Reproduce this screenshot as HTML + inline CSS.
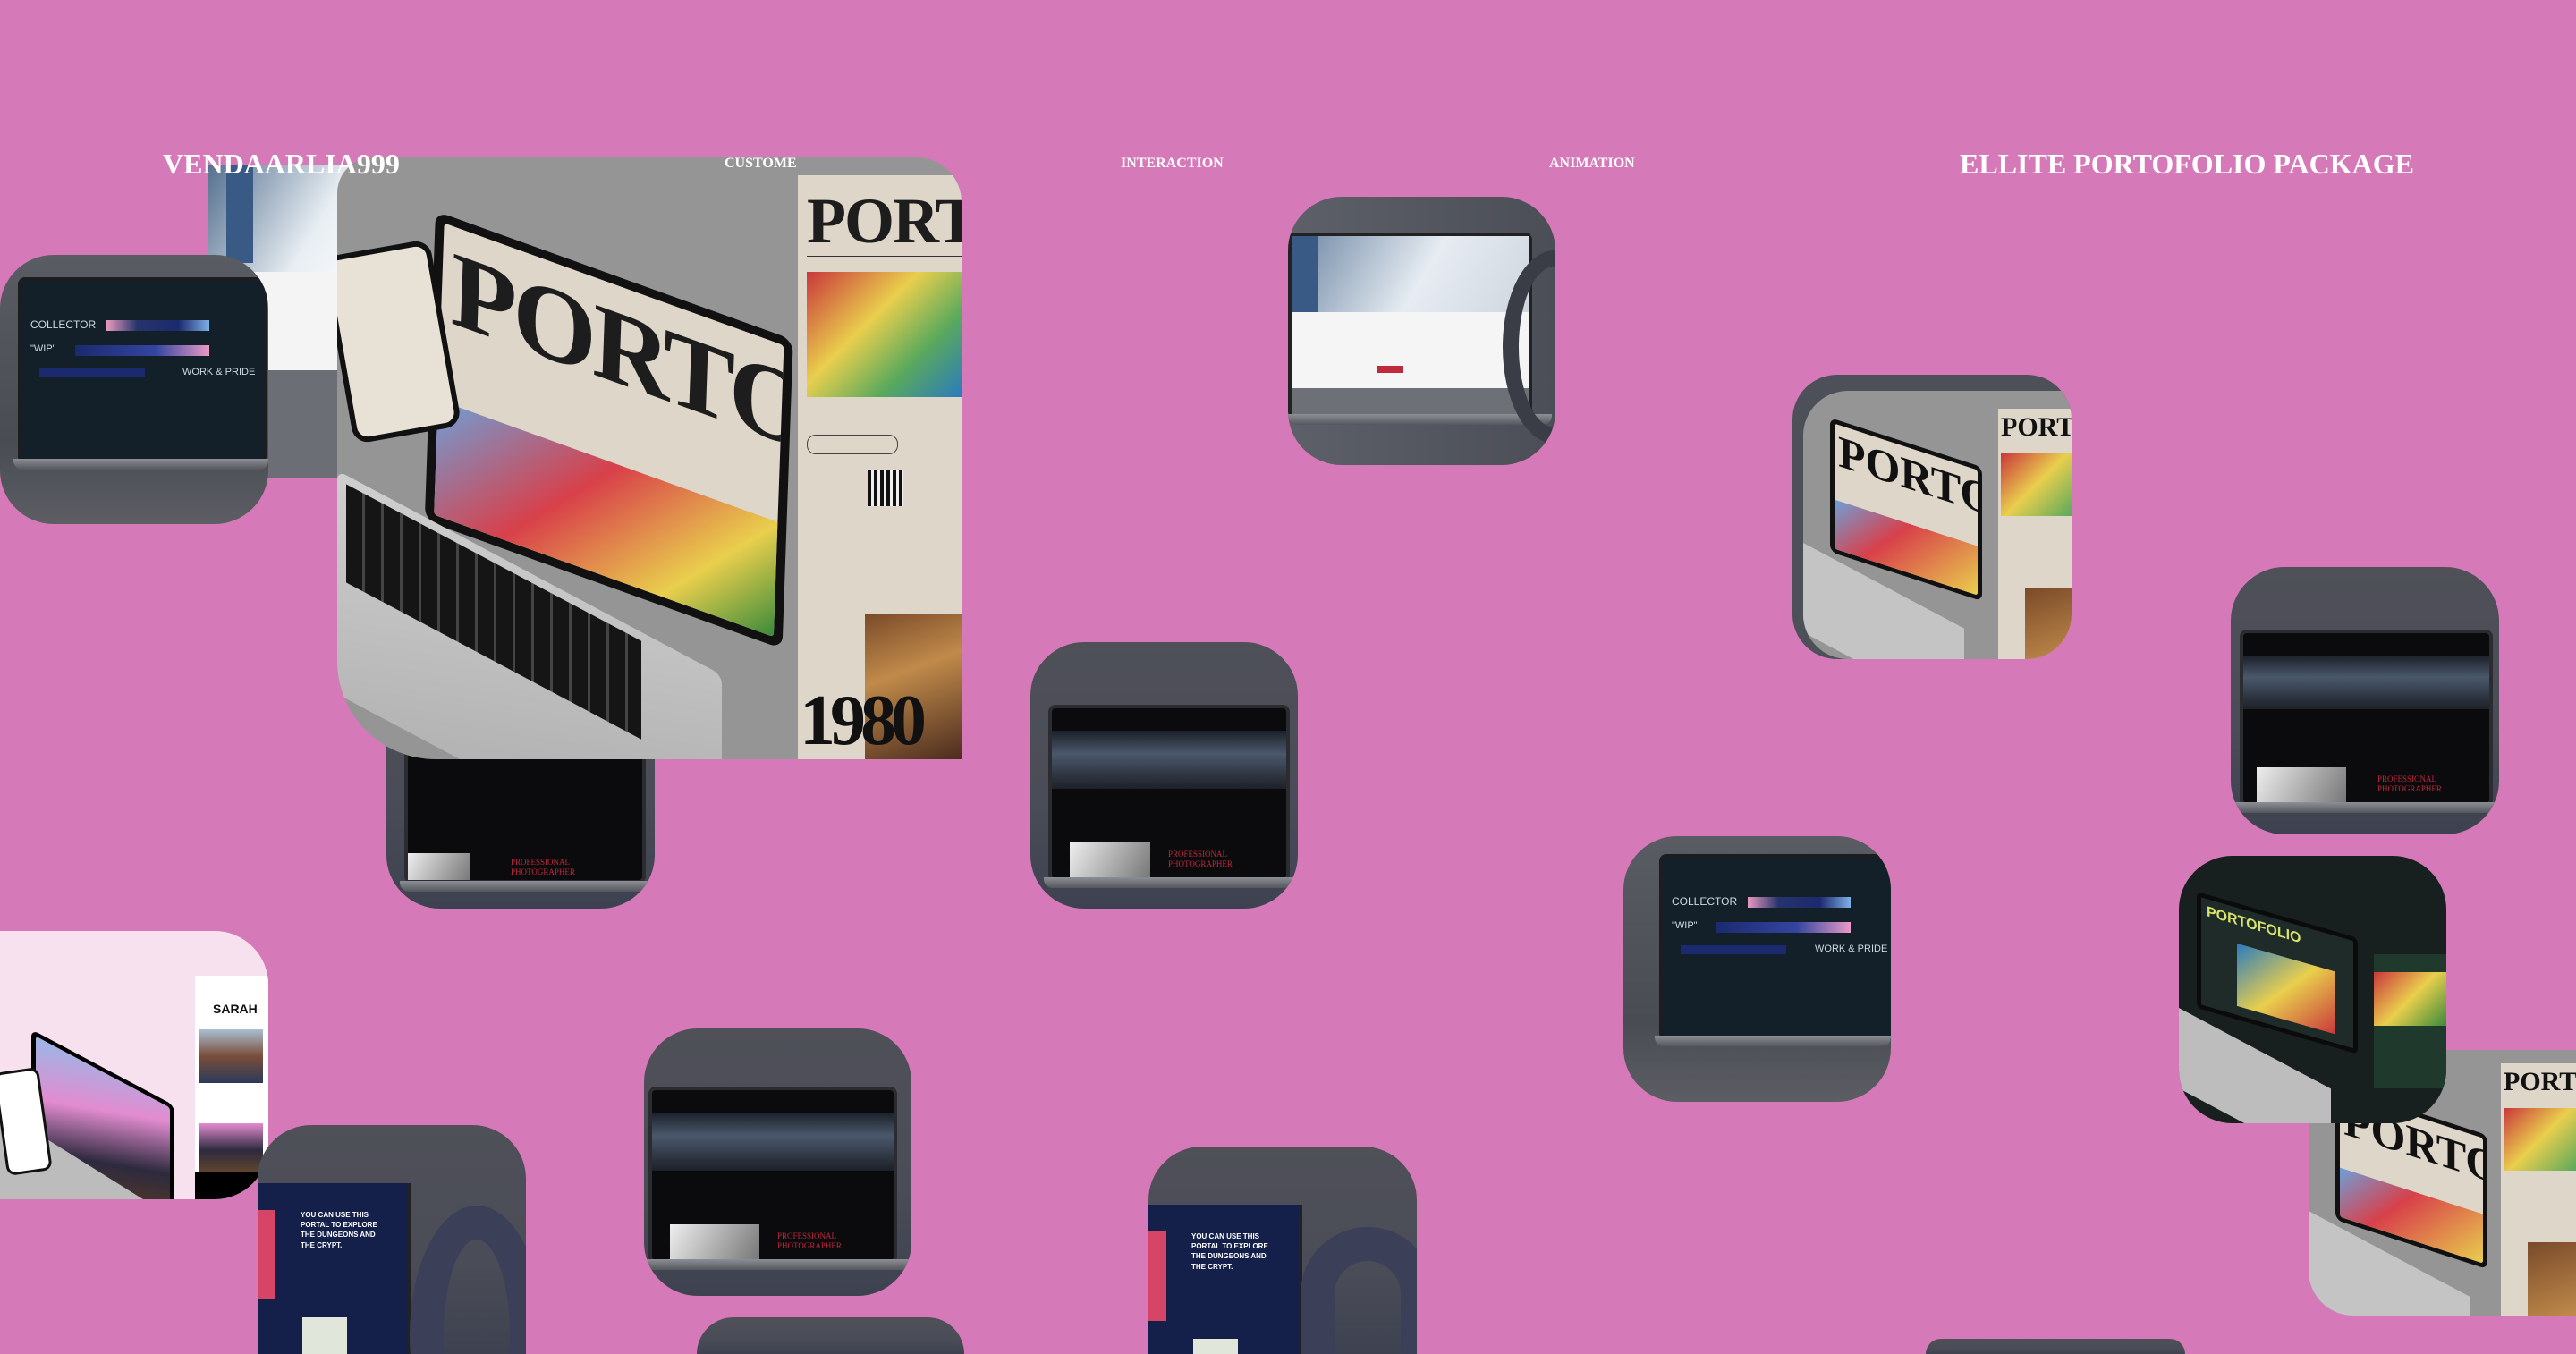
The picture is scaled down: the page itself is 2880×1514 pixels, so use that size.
<!DOCTYPE html>
<html><head><meta charset="utf-8"><style>
html,body{margin:0;padding:0;width:2880px;height:1514px;overflow:hidden}
body{background:#d679b8;font-family:"Liberation Serif",serif}
#w{position:relative;width:2880px;height:1514px;overflow:hidden;background:#d679b8}
.t{position:absolute;border-radius:60px;overflow:hidden}
.dark{background:linear-gradient(180deg,#4f5058 0%,#4a4c57 60%,#3e4250 100%)}
.lap{position:absolute;background:#0b0b0d;border:4px solid #2b2c30;border-radius:8px}
.base{position:absolute;height:12px;background:linear-gradient(#8d8f96,#55575d);border-radius:0 0 10px 10px}
.h{position:absolute;color:#fff;font-weight:bold;white-space:nowrap;line-height:1}
.sm{font-size:16px}
.red{position:absolute;color:#c0283c;font-size:9px;line-height:1.2}
.cut{border-bottom-left-radius:0;border-bottom-right-radius:0}
</style></head><body><div id="w">

<div class="t" style="left:233px;top:184px;width:200px;height:350px;border-radius:0;background:#cfd5dc">
  <div style="position:absolute;left:0;top:0;width:200px;height:120px;background:linear-gradient(120deg,#55708f,#e8eef3 60%,#fff)"></div>
  <div style="position:absolute;left:20px;top:0;width:30px;height:110px;background:#3a5a86"></div>
  <div style="position:absolute;left:0;top:120px;width:200px;height:110px;background:#f4f4f4"></div>
  <div style="position:absolute;left:0;top:230px;width:200px;height:120px;background:#6b6e74"></div>
</div>

<div class="t" style="left:0;top:285px;width:300px;height:301px;background:linear-gradient(180deg,#5a5c63,#4a4c54 70%,#5c5e64)">
  <div class="lap" style="left:20px;top:25px;width:270px;height:200px;background:#13202a;border-color:#1c1d20">
    <div style="position:absolute;left:10px;top:42px;color:#cfd8df;font:12px 'Liberation Sans',sans-serif">COLLECTOR</div>
    <div style="position:absolute;left:95px;top:44px;width:115px;height:12px;background:linear-gradient(90deg,#e89ac0,#26336b 30%,#1b2a6e 70%,#7fb0e8)"></div>
    <div style="position:absolute;left:10px;top:70px;color:#cfd8df;font:11px 'Liberation Sans',sans-serif">"WIP"</div>
    <div style="position:absolute;left:60px;top:72px;width:150px;height:12px;background:linear-gradient(90deg,#1b2a6e,#3445a0 60%,#e99ac6)"></div>
    <div style="position:absolute;left:20px;top:98px;width:118px;height:10px;background:#1b2a6e"></div>
    <div style="position:absolute;left:180px;top:96px;color:#cfd8df;font:11px 'Liberation Sans',sans-serif">WORK &amp; PRIDE</div>
  </div>
  <div class="base" style="left:15px;top:228px;width:285px"></div>
</div>

<div class="t dark" style="left:432px;top:700px;width:300px;height:316px">
  <div class="lap" style="left:20px;top:100px;width:262px;height:180px">
    <div style="position:absolute;left:0;top:150px;width:70px;height:30px;background:linear-gradient(120deg,#eee,#777)"></div>
    <div class="red" style="left:115px;top:155px">PROFESSIONAL<br>PHOTOGRAPHER</div>
  </div>
  <div class="base" style="left:15px;top:285px;width:285px"></div>
</div>

<div class="t" style="left:377px;top:176px;width:698px;height:673px;border-radius:40px 50px 0 110px;background:#959595">
  <div style="position:absolute;left:515px;top:20px;width:183px;height:653px;background:#ddd6c9">
    <div style="position:absolute;left:10px;top:10px;font:bold 72px 'Liberation Serif',serif;color:#1d1d1d;letter-spacing:-2px">PORT</div>
    <div style="position:absolute;left:10px;top:90px;width:173px;height:1px;background:#333"></div>
    <div style="position:absolute;left:10px;top:108px;width:173px;height:140px;background:linear-gradient(135deg,#c9373b,#e9cf4d 40%,#5aa95c 70%,#2a7bbd)"></div>
    <div style="position:absolute;left:10px;top:290px;width:100px;height:20px;border:1px solid #444;border-radius:10px"></div>
    <div style="position:absolute;left:78px;top:330px;width:40px;height:40px;background:repeating-linear-gradient(90deg,#111 0 4px,#eee 4px 7px)"></div>
    <div style="position:absolute;left:75px;top:490px;width:108px;height:163px;background:linear-gradient(160deg,#7a4a2a,#c08a4a 40%,#4b2c1f)"></div>
    <div style="position:absolute;left:2px;top:565px;font:bold 80px 'Liberation Serif',serif;color:#111;letter-spacing:-6px">1980</div>
  </div>
  <div style="position:absolute;left:110px;top:60px;width:380px;height:330px;background:#ddd6c9;border:10px solid #111;border-radius:14px;transform:skewY(18deg) rotate(2deg);transform-origin:0 0;overflow:hidden">
    <div style="position:absolute;left:10px;top:0;font:bold 120px 'Liberation Serif',serif;color:#1d1d1d;letter-spacing:-4px">PORTO</div>
    <div style="position:absolute;left:0;top:200px;width:380px;height:130px;background:linear-gradient(135deg,#6da0d8,#d8404a 40%,#e9cf4d 75%,#3a8a3a)"></div>
  </div>
  <div style="position:absolute;left:0;top:350px;width:430px;height:250px;background:linear-gradient(160deg,#cfcfcf,#a9a9a9);transform:skewY(28deg);transform-origin:0 0;border-radius:10px">
    <div style="position:absolute;left:10px;top:10px;width:330px;height:110px;background:repeating-linear-gradient(90deg,#151515 0 18px,#444 18px 21px)"></div>
  </div>
  <div style="position:absolute;left:0;top:100px;width:110px;height:200px;background:#e8e2d6;border:6px solid #111;border-radius:18px;transform:rotate(-10deg)"></div>
</div>

<div class="t" style="left:1440px;top:220px;width:299px;height:300px;background:linear-gradient(90deg,#5d6069,#4b4e57)">
  <div class="lap" style="left:0;top:40px;width:265px;height:200px;background:#f5f5f5;border-color:#222">
    <div style="position:absolute;left:0;top:0;width:265px;height:85px;background:linear-gradient(120deg,#6c85a3,#e6ecf2 55%,#cfd6de)"></div>
    <div style="position:absolute;left:0;top:0;width:30px;height:85px;background:#3a5a86"></div>
    <div style="position:absolute;left:95px;top:145px;width:30px;height:8px;background:#c0283c"></div>
    <div style="position:absolute;left:0;top:170px;width:265px;height:30px;background:#6d7077"></div>
  </div>
  <div class="base" style="left:0;top:243px;width:295px"></div>
  <div style="position:absolute;left:240px;top:60px;width:80px;height:180px;border-radius:50%;border:18px solid #3a3d45"></div>
</div>

<div class="t dark" style="left:1152px;top:718px;width:299px;height:298px">
  <div class="lap" style="left:20px;top:70px;width:262px;height:190px">
    <div style="position:absolute;left:0;top:25px;width:262px;height:65px;background:linear-gradient(180deg,#1c2029,#4a586c 40%,#1d2027)"></div>
    <div style="position:absolute;left:20px;top:150px;width:90px;height:40px;background:linear-gradient(120deg,#eee,#777)"></div>
    <div class="red" style="left:130px;top:158px">PROFESSIONAL<br>PHOTOGRAPHER</div>
  </div>
  <div class="base" style="left:15px;top:263px;width:284px"></div>
</div>

<div class="t" style="left:2004px;top:419px;width:312px;height:318px;background:#4d5059;border-radius:50px">
  <div style="position:absolute;left:12px;top:18px;width:300px;height:300px;background:#959595;border-radius:50px 0 0 50px;overflow:hidden">
    <div style="position:absolute;left:218px;top:20px;width:82px;height:280px;background:#ddd6c9">
      <div style="position:absolute;left:3px;top:4px;font:bold 30px 'Liberation Serif',serif;color:#111">PORT</div>
      <div style="position:absolute;left:3px;top:50px;width:79px;height:70px;background:linear-gradient(135deg,#c9373b,#e9cf4d 50%,#5aa95c)"></div>
      <div style="position:absolute;left:30px;top:200px;width:52px;height:80px;background:linear-gradient(160deg,#7a4a2a,#c08a4a)"></div>
    </div>
    <div style="position:absolute;left:30px;top:30px;width:160px;height:140px;background:#ddd6c9;border:5px solid #111;border-radius:8px;transform:skewY(18deg);transform-origin:0 0;overflow:hidden">
      <div style="font:bold 50px 'Liberation Serif',serif;color:#111;margin-left:4px">PORTO</div>
      <div style="position:absolute;left:0;top:85px;width:160px;height:55px;background:linear-gradient(135deg,#6da0d8,#d8404a 40%,#e9cf4d)"></div>
    </div>
    <div style="position:absolute;left:0;top:170px;width:180px;height:100px;background:#c4c4c4;transform:skewY(28deg);transform-origin:0 0"></div>
  </div>
</div>

<div class="t dark" style="left:2494px;top:634px;width:300px;height:299px">
  <div class="lap" style="left:10px;top:70px;width:275px;height:190px">
    <div style="position:absolute;left:0;top:25px;width:275px;height:60px;background:linear-gradient(180deg,#1c2029,#4a586c 40%,#1d2027)"></div>
    <div style="position:absolute;left:15px;top:150px;width:100px;height:40px;background:linear-gradient(120deg,#eee,#777)"></div>
    <div class="red" style="left:150px;top:158px">PROFESSIONAL<br>PHOTOGRAPHER</div>
  </div>
  <div class="base" style="left:0;top:263px;width:300px"></div>
</div>

<div class="t" style="left:1815px;top:935px;width:299px;height:297px;background:linear-gradient(180deg,#5a5c63,#4a4c54 70%,#5c5e64)">
  <div class="lap" style="left:40px;top:20px;width:259px;height:200px;background:#13202a;border-color:#1c1d20">
    <div style="position:absolute;left:10px;top:42px;color:#cfd8df;font:12px 'Liberation Sans',sans-serif">COLLECTOR</div>
    <div style="position:absolute;left:95px;top:44px;width:115px;height:12px;background:linear-gradient(90deg,#e89ac0,#26336b 30%,#1b2a6e 70%,#7fb0e8)"></div>
    <div style="position:absolute;left:10px;top:70px;color:#cfd8df;font:11px 'Liberation Sans',sans-serif">"WIP"</div>
    <div style="position:absolute;left:60px;top:72px;width:150px;height:12px;background:linear-gradient(90deg,#1b2a6e,#3445a0 60%,#e99ac6)"></div>
    <div style="position:absolute;left:20px;top:98px;width:118px;height:10px;background:#1b2a6e"></div>
    <div style="position:absolute;left:170px;top:96px;color:#cfd8df;font:11px 'Liberation Sans',sans-serif">WORK &amp; PRIDE</div>
  </div>
  <div class="base" style="left:35px;top:223px;width:264px"></div>
</div>

<div class="t" style="left:2581px;top:1174px;width:299px;height:297px;background:#959595;border-radius:50px 0 0 50px">
  <div style="position:absolute;left:215px;top:15px;width:84px;height:282px;background:#ddd6c9">
    <div style="position:absolute;left:3px;top:4px;font:bold 30px 'Liberation Serif',serif;color:#111">PORT</div>
    <div style="position:absolute;left:3px;top:50px;width:81px;height:70px;background:linear-gradient(135deg,#c9373b,#e9cf4d 50%,#5aa95c)"></div>
    <div style="position:absolute;left:30px;top:200px;width:54px;height:82px;background:linear-gradient(160deg,#7a4a2a,#c08a4a)"></div>
  </div>
  <div style="position:absolute;left:30px;top:40px;width:160px;height:140px;background:#ddd6c9;border:5px solid #111;border-radius:8px;transform:skewY(18deg);transform-origin:0 0;overflow:hidden">
    <div style="font:bold 50px 'Liberation Serif',serif;color:#111;margin-left:4px">PORTO</div>
    <div style="position:absolute;left:0;top:85px;width:160px;height:55px;background:linear-gradient(135deg,#6da0d8,#d8404a 40%,#e9cf4d)"></div>
  </div>
  <div style="position:absolute;left:0;top:180px;width:180px;height:100px;background:#c4c4c4;transform:skewY(28deg);transform-origin:0 0"></div>
</div>

<div class="t" style="left:2436px;top:957px;width:299px;height:299px;background:#17201f">
  <div style="position:absolute;left:20px;top:40px;width:170px;height:120px;background:#1f2b29;border:5px solid #0b0b0b;border-radius:6px;transform:skewY(16deg);transform-origin:0 0;overflow:hidden">
    <div style="color:#d8e36a;font:bold 16px 'Liberation Sans',sans-serif;margin:6px">PORTOFOLIO</div>
    <div style="position:absolute;left:40px;top:40px;width:110px;height:70px;background:linear-gradient(135deg,#2a7bbd,#e9cf4d 50%,#c9373b)"></div>
  </div>
  <div style="position:absolute;left:0;top:170px;width:170px;height:90px;background:#bdbdbd;transform:skewY(28deg);transform-origin:0 0"></div>
  <div style="position:absolute;left:218px;top:110px;width:81px;height:150px;background:#1f3a2c">
    <div style="position:absolute;left:0;top:20px;width:81px;height:60px;background:linear-gradient(135deg,#c9373b,#e9cf4d,#3a8a3a)"></div>
  </div>
</div>

<div class="t" style="left:0;top:1041px;width:300px;height:300px;background:#f8e1ef;border-radius:0 60px 60px 0">
  <div style="position:absolute;left:35px;top:110px;width:150px;height:180px;background:linear-gradient(160deg,#9ab7e6,#e28cd0 30%,#2d2a3e 55%,#5b3a22 80%,#111);border:5px solid #000;border-radius:8px;transform:skewY(28deg);transform-origin:0 0"></div>
  <div style="position:absolute;left:0;top:200px;width:160px;height:120px;background:#bcbcbc;transform:skewY(32deg);transform-origin:0 0"></div>
  <div style="position:absolute;left:0;top:155px;width:45px;height:110px;background:#fff;border:3px solid #111;border-radius:10px;transform:rotate(-8deg)"></div>
  <div style="position:absolute;left:218px;top:50px;width:82px;height:250px;background:#fff">
    <div style="position:absolute;left:20px;top:30px;font:bold 14px 'Liberation Sans',sans-serif;color:#111;line-height:1">SARAH</div>
    <div style="position:absolute;left:4px;top:60px;width:72px;height:60px;background:linear-gradient(180deg,#a9bfd2,#7a4d3a 50%,#2b3a5a)"></div>
    <div style="position:absolute;left:4px;top:165px;width:72px;height:60px;background:linear-gradient(180deg,#e28cd0,#2d2a3e 50%,#6b4a2a)"></div>
    <div style="position:absolute;left:0;top:220px;width:82px;height:30px;background:#000"></div>
  </div>
</div>

<div class="t dark cut" style="left:288px;top:1258px;width:300px;height:256px">
  <div style="position:absolute;left:0;top:65px;width:168px;height:191px;background:#14204a;border-right:4px solid #222">
    <div style="position:absolute;left:0;top:30px;width:20px;height:100px;background:#d64565"></div>
    <div style="position:absolute;left:48px;top:30px;color:#fff;font:bold 8px 'Liberation Sans',sans-serif;line-height:1.4">YOU CAN USE THIS<br>PORTAL TO EXPLORE<br>THE DUNGEONS AND<br>THE CRYPT.</div>
    <div style="position:absolute;left:50px;top:150px;width:50px;height:41px;background:#e0e6d9"></div>
  </div>
  <div style="position:absolute;left:170px;top:90px;width:150px;height:290px;border-radius:50%;border:38px solid #3b4058;box-sizing:border-box"></div>
</div>

<div class="t dark" style="left:720px;top:1150px;width:299px;height:299px">
  <div class="lap" style="left:5px;top:65px;width:270px;height:190px">
    <div style="position:absolute;left:0;top:25px;width:270px;height:65px;background:linear-gradient(180deg,#1c2029,#4a586c 40%,#1d2027)"></div>
    <div style="position:absolute;left:20px;top:150px;width:100px;height:40px;background:linear-gradient(120deg,#eee,#777)"></div>
    <div class="red" style="left:140px;top:158px">PROFESSIONAL<br>PHOTOGRAPHER</div>
  </div>
  <div class="base" style="left:0;top:258px;width:299px"></div>
</div>
<div class="t dark cut" style="left:779px;top:1473px;width:299px;height:41px"></div>

<div class="t dark cut" style="left:1284px;top:1282px;width:300px;height:232px">
  <div style="position:absolute;left:0;top:65px;width:168px;height:167px;background:#14204a;border-right:4px solid #222">
    <div style="position:absolute;left:0;top:30px;width:20px;height:100px;background:#d64565"></div>
    <div style="position:absolute;left:48px;top:30px;color:#fff;font:bold 8px 'Liberation Sans',sans-serif;line-height:1.4">YOU CAN USE THIS<br>PORTAL TO EXPLORE<br>THE DUNGEONS AND<br>THE CRYPT.</div>
    <div style="position:absolute;left:50px;top:150px;width:50px;height:17px;background:#e0e6d9"></div>
  </div>
  <div style="position:absolute;left:170px;top:90px;width:150px;height:142px;border-radius:75px 75px 0 0;border:38px solid #3b4058;border-bottom:0;box-sizing:border-box"></div>
</div>
<div class="t dark cut" style="left:2153px;top:1497px;width:290px;height:17px;border-radius:17px 17px 0 0"></div>

<div class="h" style="left:182px;top:167px;font-size:32px">VENDAARLIA999</div>
<div class="h sm" style="left:810px;top:175px">CUSTOME</div>
<div class="h sm" style="left:1253px;top:175px">INTERACTION</div>
<div class="h sm" style="left:1732px;top:175px">ANIMATION</div>
<div class="h" style="left:2191px;top:167px;font-size:32px">ELLITE PORTOFOLIO PACKAGE</div>
</div></body></html>
